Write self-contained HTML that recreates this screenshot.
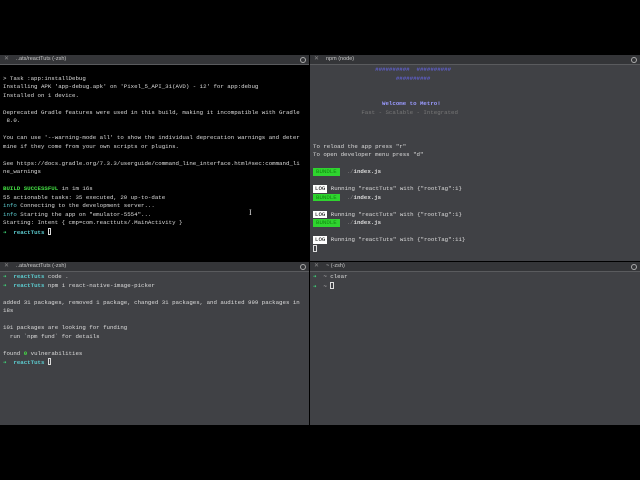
<!DOCTYPE html>
<html><head><meta charset="utf-8"><style>
*{margin:0;padding:0;box-sizing:border-box}
body{width:640px;height:480px;background:#000;position:relative;overflow:hidden;font-family:"Liberation Mono",monospace;}
.pane{position:absolute;background:#404145;overflow:hidden}
.tb{position:absolute;left:0;right:0;top:0;height:10px;background:#343538;border-bottom:1px solid #5a5b5e;font-family:"Liberation Sans",sans-serif;font-size:5.5px;color:#c8c8c8;line-height:9px;padding-left:16px;white-space:nowrap}
.tb .x{position:absolute;left:4px;top:0;color:#888;font-size:6px}
.tb .c{position:absolute;right:3px;top:2px;width:6px;height:6px;border:1px solid #aaa;border-radius:50%}
.txt{position:absolute;left:3px;font-size:5.75px;line-height:8.5px;color:#dcdcdc;white-space:pre}
.g{color:#44e044;font-weight:bold}
.cy{color:#5ccdd0}
.ar{color:#3fdc7a}
.cur{display:inline-block;width:3.5px;height:7px;border:1px solid #ddd;vertical-align:-1px}
.bd{background:#2fd42f;color:#118811;padding:0 3px;display:inline-block;line-height:7.5px}
.lg{background:#fff;color:#000;padding:0 2px;display:inline-block;line-height:7.5px}
.st{color:#6b6bff}
.wm{color:#9a9aff;font-weight:bold}
.fs{color:#777}
.dim{color:#888}
</style></head><body>
<div class="pane" style="left:0;top:55px;width:309px;height:206px;background:#000">
<div class="tb"><span class="x">✕</span>..ats/reactTuts (-zsh)<span class="c"></span></div>
<div class="txt" style="top:11px">
&gt; Task :app:installDebug
Installing APK 'app-debug.apk' on 'Pixel_5_API_31(AVD) - 12' for app:debug
Installed on 1 device.

Deprecated Gradle features were used in this build, making it incompatible with Gradle
 8.0.

You can use '--warning-mode all' to show the individual deprecation warnings and deter
mine if they come from your own scripts or plugins.

See https://docs.gradle.org/7.3.3/userguide/command_line_interface.html#sec:command_li
ne_warnings

<span class="g">BUILD SUCCESSFUL</span> in 1m 16s
55 actionable tasks: 35 executed, 20 up-to-date
<span class="cy">info</span> Connecting to the development server...
<span class="cy">info</span> Starting the app on "emulator-5554"...
Starting: Intent { cmp=com.reacttuts/.MainActivity }
<span class="ar">➜</span>  <span class="cy" style="font-weight:bold">reactTuts</span> <span class="cur"></span></div>
<div style="position:absolute;left:249px;top:153px;color:#ddd;font-size:8px;font-family:'Liberation Serif',serif">I</div>
</div>
<div class="pane" style="left:310px;top:55px;width:330px;height:206px">
<div class="tb"><span class="x">✕</span>npm (node)<span class="c"></span></div>
<div class="txt" style="top:11px">                  <span class="st">##########  ##########</span>
                        <span class="st">##########</span>


                    <span class="wm">Welcome to Metro!</span>
              <span class="fs">Fast - Scalable - Integrated</span>



To reload the app press "r"
To open developer menu press "d"

<span class="bd">BUNDLE</span>  <span class="dim">./</span><b>index.js</b>

<span class="lg">LOG</span> Running "reactTuts" with {"rootTag":1}
<span class="bd">BUNDLE</span>  <span class="dim">./</span><b>index.js</b>

<span class="lg">LOG</span> Running "reactTuts" with {"rootTag":1}
<span class="bd">BUNDLE</span>  <span class="dim">./</span><b>index.js</b>

<span class="lg">LOG</span> Running "reactTuts" with {"rootTag":11}
<span class="cur"></span></div>
</div>
<div class="pane" style="left:0;top:262px;width:309px;height:163px">
<div class="tb"><span class="x">✕</span>..ats/reactTuts (-zsh)<span class="c"></span></div>
<div class="txt" style="top:11px"><span class="ar">➜</span>  <span class="cy" style="font-weight:bold">reactTuts</span> code .
<span class="ar">➜</span>  <span class="cy" style="font-weight:bold">reactTuts</span> npm i react-native-image-picker

added 31 packages, removed 1 package, changed 31 packages, and audited 999 packages in
18s

101 packages are looking for funding
  run `npm fund` for details

found <span class="g">0</span> vulnerabilities
<span class="ar">➜</span>  <span class="cy" style="font-weight:bold">reactTuts</span> <span class="cur"></span></div>
</div>
<div class="pane" style="left:310px;top:262px;width:330px;height:163px">
<div class="tb"><span class="x">✕</span>~ (-zsh)<span class="c"></span></div>
<div class="txt" style="top:11px"><span class="ar">➜</span>  ~ clear
<span class="ar">➜</span>  ~ <span class="cur"></span></div>
</div>
</body></html>
